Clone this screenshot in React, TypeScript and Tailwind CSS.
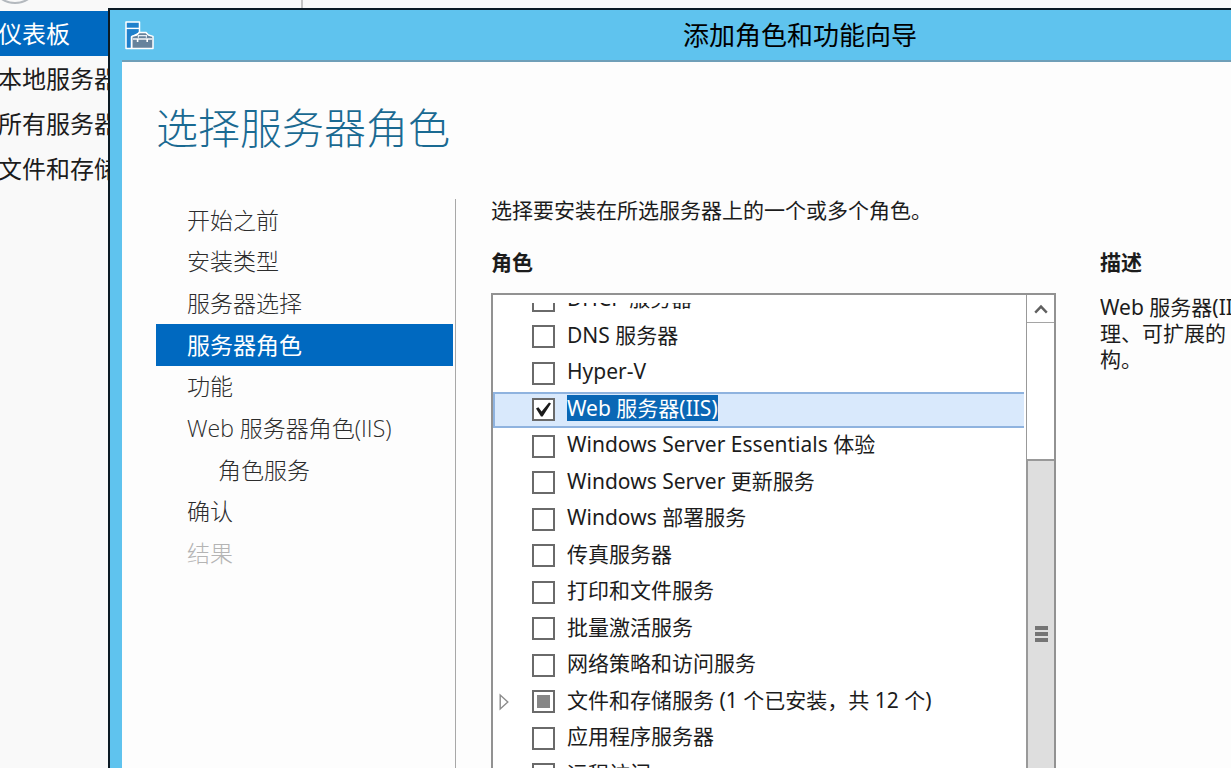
import { useState } from "react";
import clsx from "clsx";

type Role = {
  name: string;
  state?: "checked" | "partial";
  expandable?: boolean;
};

const serverViews = ["仪表板", "本地服务器", "所有服务器", "文件和存储"];

const steps = [
  { name: "开始之前" },
  { name: "安装类型" },
  { name: "服务器选择" },
  { name: "服务器角色" },
  { name: "功能" },
  { name: "Web 服务器角色(IIS)" },
  { name: "角色服务", nested: true },
  { name: "确认" },
  { name: "结果", disabled: true },
];

const roles: Role[] = [
  { name: "DHCP 服务器" },
  { name: "DNS 服务器" },
  { name: "Hyper-V" },
  { name: "Web 服务器(IIS)", state: "checked" },
  { name: "Windows Server Essentials 体验" },
  { name: "Windows Server 更新服务" },
  { name: "Windows 部署服务" },
  { name: "传真服务器" },
  { name: "打印和文件服务" },
  { name: "批量激活服务" },
  { name: "网络策略和访问服务" },
  { name: "文件和存储服务 (1 个已安装，共 12 个)", state: "partial", expandable: true },
  { name: "应用程序服务器" },
  { name: "远程访问" },
];

function WizardIcon() {
  return (
    <svg width="29" height="29" viewBox="0 0 29 29" fill="none" aria-hidden="true">
      <path d="M1 1h13.5v11L6.5 16v11.4H1z" fill="#1f80cc" stroke="#fff" strokeWidth="1.5" strokeLinejoin="round" />
      <path d="M1 7.4h13.5" stroke="#fff" strokeWidth="1.4" />
      <path
        d="M6.8 27.4V15.4l5-1.4 2.6-2.6h6.4l2.6 2.6 4.6 1.4v12z"
        fill="#66829c"
        stroke="#fff"
        strokeWidth="1.5"
        strokeLinejoin="round"
      />
      <path d="M13.4 16.8v-2.2h8v2.2" stroke="#e6eef5" strokeWidth="1.2" />
      <path d="M8 18h19" stroke="#fff" strokeWidth="1.4" />
      <path d="M12.6 18v3M22.2 18v3" stroke="#fff" strokeWidth="1.6" />
    </svg>
  );
}

function RoleRow({ role, selected, onSelect }: { role: Role; selected: boolean; onSelect: () => void }) {
  const [checked, setChecked] = useState(role.state === "checked");

  return (
    <li
      className={clsx(
        "flex items-center border-y-2 border-l-2 pl-1",
        selected ? "border-[#8fb3df] bg-[#d9e9fc]" : "border-transparent",
      )}
      onClick={onSelect}
    >
      <span className="w-[33px] shrink-0">
        {role.expandable && (
          <button type="button" aria-label="展开" className="block">
            <svg width="10" height="18" viewBox="0 0 10 18" fill="#fff" stroke="#8c8c8c" strokeWidth="1.4">
              <path d="M1.2 2v14L8.8 9z" />
            </svg>
          </button>
        )}
      </span>
      <label className="flex min-w-0 items-center gap-3">
        <span className="grid shrink-0 place-items-center">
          <input
            type="checkbox"
            checked={checked}
            onChange={(e) => setChecked(e.target.checked)}
            className="col-start-1 row-start-1 size-[23px] appearance-none border-2 border-[#6a6a6a] bg-white"
          />
          {checked && (
            <svg
              className="pointer-events-none col-start-1 row-start-1"
              width="17"
              height="17"
              viewBox="0 0 17 17"
              fill="#1a1a1a"
            >
              <path d="M1 7.4l2.4-1.2 3.2 4.2L14 1.4l2 1.2L7.6 15.6H6z" />
            </svg>
          )}
          {role.state === "partial" && !checked && (
            <span className="pointer-events-none col-start-1 row-start-1 size-[13px] bg-[#868686]" />
          )}
        </span>
        <span
          className={clsx(
            "mb-1 whitespace-nowrap text-[21px] leading-[26px]",
            selected && "bg-[#0a67b5] text-white",
          )}
        >
          {role.name}
        </span>
      </label>
    </li>
  );
}

function Scrollbar() {
  return (
    <div className="flex w-[28px] shrink-0 flex-col border-l border-[#999]">
      <button
        type="button"
        aria-label="向上滚动"
        className="flex h-[28px] shrink-0 items-center justify-center border-b border-[#a5a5a5]"
      >
        <svg width="14" height="10" viewBox="0 0 14 10" fill="none" stroke="#606060" strokeWidth="2.4">
          <path d="M1.2 8.6L7 2.6l5.8 6" />
        </svg>
      </button>
      <div className="h-[136px] shrink-0" />
      <div className="flex flex-1 flex-col items-center gap-[2px] border-l border-t-2 border-[#999] bg-[#dedede] pt-[165px]">
        <span className="h-1 w-[13px] bg-[#757575]" />
        <span className="h-1 w-[13px] bg-[#757575]" />
        <span className="h-1 w-[13px] bg-[#757575]" />
      </div>
    </div>
  );
}

function StepNav() {
  return (
    <nav className="grid h-[375px] w-[297px] shrink-0 grid-rows-9 text-[23px] font-light text-[#2c2c2c]">
      {steps.map((step) => (
        <button
          key={step.name}
          type="button"
          disabled={step.disabled}
          className={clsx(
            "flex items-center text-left leading-[26px]",
            step.nested ? "pl-[62px]" : "pl-[31px]",
            step.name === "服务器角色" && "bg-[#0069c0] font-normal text-white",
            step.disabled && "text-[#b4b4b4]",
          )}
        >
          {step.name}
        </button>
      ))}
    </nav>
  );
}

export default function App() {
  const [selected, setSelected] = useState("Web 服务器(IIS)");

  return (
    <div className="flex h-screen flex-col overflow-hidden bg-[#f9f9f9] font-['Noto_Sans','Noto_Sans_CJK_SC',sans-serif] text-[#1c1c1c]">
      {/* Server manager toolbar behind the wizard */}
      <div className="flex h-[8px] shrink-0 items-end overflow-hidden">
        <svg width="36" height="8" viewBox="0 0 36 8" fill="none" stroke="#b4b9be" strokeWidth="2">
          <circle cx="15" cy="-21" r="24" />
        </svg>
        <span className="ml-[265px] h-full w-[2px] bg-[#c4c4c4]" />
      </div>

      <div className="flex min-h-0 flex-1">
        <aside className="w-[108px] shrink-0 overflow-hidden pt-[3px]">
          {serverViews.map((view, i) => (
            <a
              key={view}
              href="#"
              className={clsx(
                "-ml-[2px] block h-[45px] whitespace-nowrap text-[24px] leading-[45px]",
                i === 0 && "bg-[#0069c0] text-white",
              )}
            >
              {view}
            </a>
          ))}
        </aside>

        <section className="flex min-w-0 flex-1 flex-col border-l-2 border-t-2 border-[#0b1a24] bg-[#5fc3ee]">
          <header className="flex h-[50px] shrink-0 items-center pl-[15px]">
            <WizardIcon />
            <h1 className="ml-[215px] flex-1 text-center text-[26px] leading-[32px] text-black">
              添加角色和功能向导
            </h1>
          </header>

          <main className="ml-3 flex min-h-0 flex-1 flex-col border-t-2 border-[#6f9fb8] bg-[#fdfdfd] pl-[34px]">
            <h2 className="mt-[41px] shrink-0 text-[42px] font-light leading-[50px] text-[#1a6a92]">
              选择服务器角色
            </h2>

            <div className="mt-[46px] flex min-h-0 flex-1">
              <div className="font-['Open_Sans','Noto_Sans_CJK_SC',sans-serif]">
                <StepNav />
              </div>
              <div className="ml-[2px] flex min-w-0 flex-1 flex-col border-l border-[#a8a8a8] pl-[35px]">
                <p className="shrink-0 text-[21px] leading-[22px]">选择要安装在所选服务器上的一个或多个角色。</p>

                <div className="mt-[28px] flex min-h-0 flex-1 gap-[44px]">
                  <div className="flex min-w-0 flex-1 flex-col">
                    <h3 className="mb-[18px] text-[21px] font-bold leading-[26px]">角色</h3>
                    <div className="flex min-h-0 flex-1 border-x-2 border-t-2 border-[#929292] bg-white">
                      <div className="mt-2 min-w-0 flex-1 overflow-hidden pr-[2px]">
                        <ul className="-mt-[21px] grid h-[511px] auto-rows-fr">
                          {roles.map((role) => (
                            <RoleRow
                              key={role.name}
                              role={role}
                              selected={selected === role.name}
                              onSelect={() => setSelected(role.name)}
                            />
                          ))}
                        </ul>
                      </div>
                      <Scrollbar />
                    </div>
                  </div>

                  <div className="w-[131px] shrink-0 overflow-hidden text-[21px] leading-[26px]">
                    <h3 className="mb-[19px] font-bold">描述</h3>
                    <p className="whitespace-nowrap">
                      Web 服务器(IIS
                      <br />
                      理、可扩展的
                      <br />
                      构。
                    </p>
                  </div>
                </div>
              </div>
            </div>
          </main>
        </section>
      </div>
    </div>
  );
}
